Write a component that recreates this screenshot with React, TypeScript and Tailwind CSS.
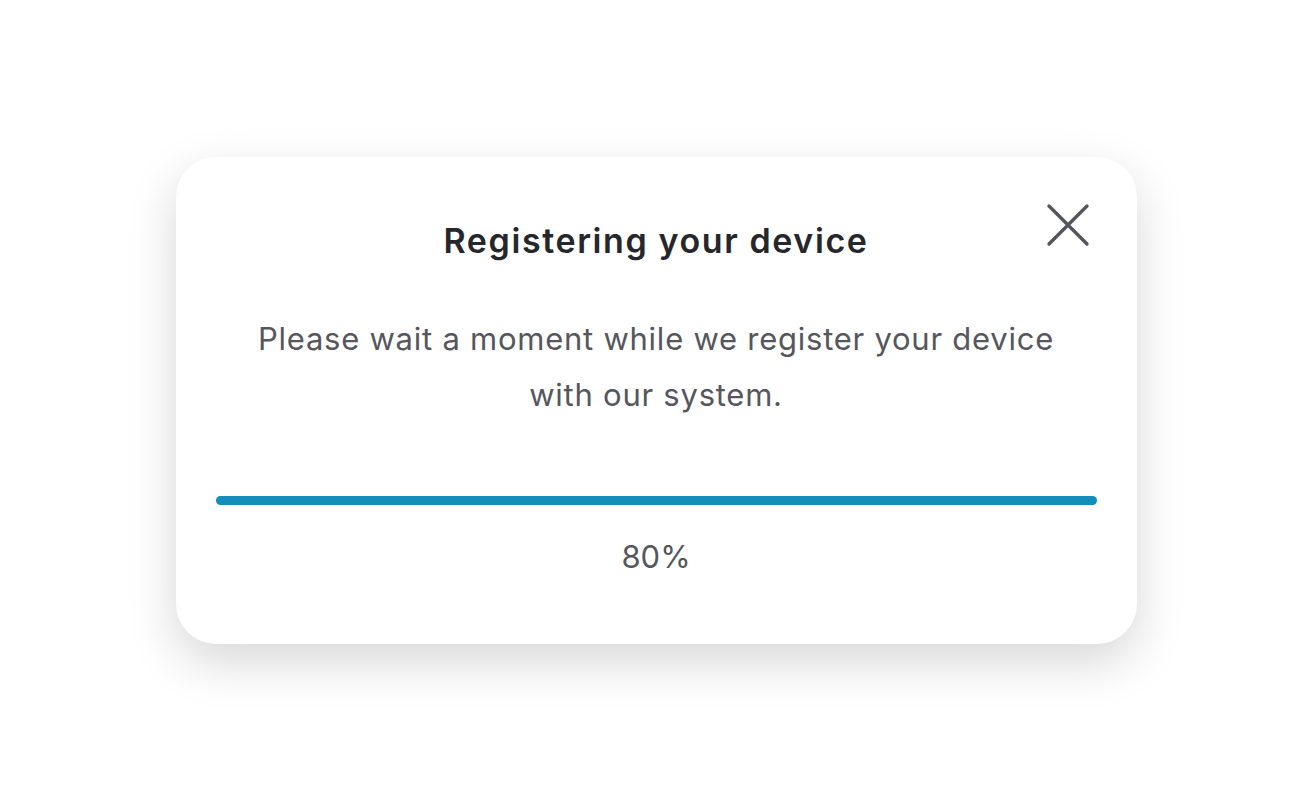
export default function App() {
  const progress = 80;

  return (
    <div className="w-full h-[800px] bg-white flex items-center justify-center font-['Inter',sans-serif]">
      <div className="relative w-[961px] h-[487px] rounded-[40px] bg-white shadow-[0_18px_50px_rgba(0,0,0,0.16)] px-10 pt-[64px] flex flex-col items-center">
        {/* close */}
        <button className="absolute top-[46px] right-[47px] w-[44px] h-[44px] text-[#55565c]">
          <svg viewBox="0 0 44 44" className="w-full h-full" fill="none" stroke="currentColor" strokeWidth="3.4" strokeLinecap="round">
            <path d="M3 3 L41 41 M41 3 L3 41" />
          </svg>
        </button>

        <h2 className="text-[34px] leading-[40px] font-semibold tracking-[1.6px] text-[#26272c]">
          Registering your device
        </h2>

        <p className="mt-[50px] text-[31px] leading-[56px] tracking-[0.75px] text-[#55565e] text-center max-w-[830px]">
          Please wait a moment while we register your device with our system.
        </p>

        {/* progress */}
        <div className="mt-[73px] w-full h-[9px] rounded-full bg-[#138dba]" />

        <div className="mt-[36px] text-[31px] leading-[32px] text-[#55565e]">{progress}%</div>
      </div>
    </div>
  );
}
